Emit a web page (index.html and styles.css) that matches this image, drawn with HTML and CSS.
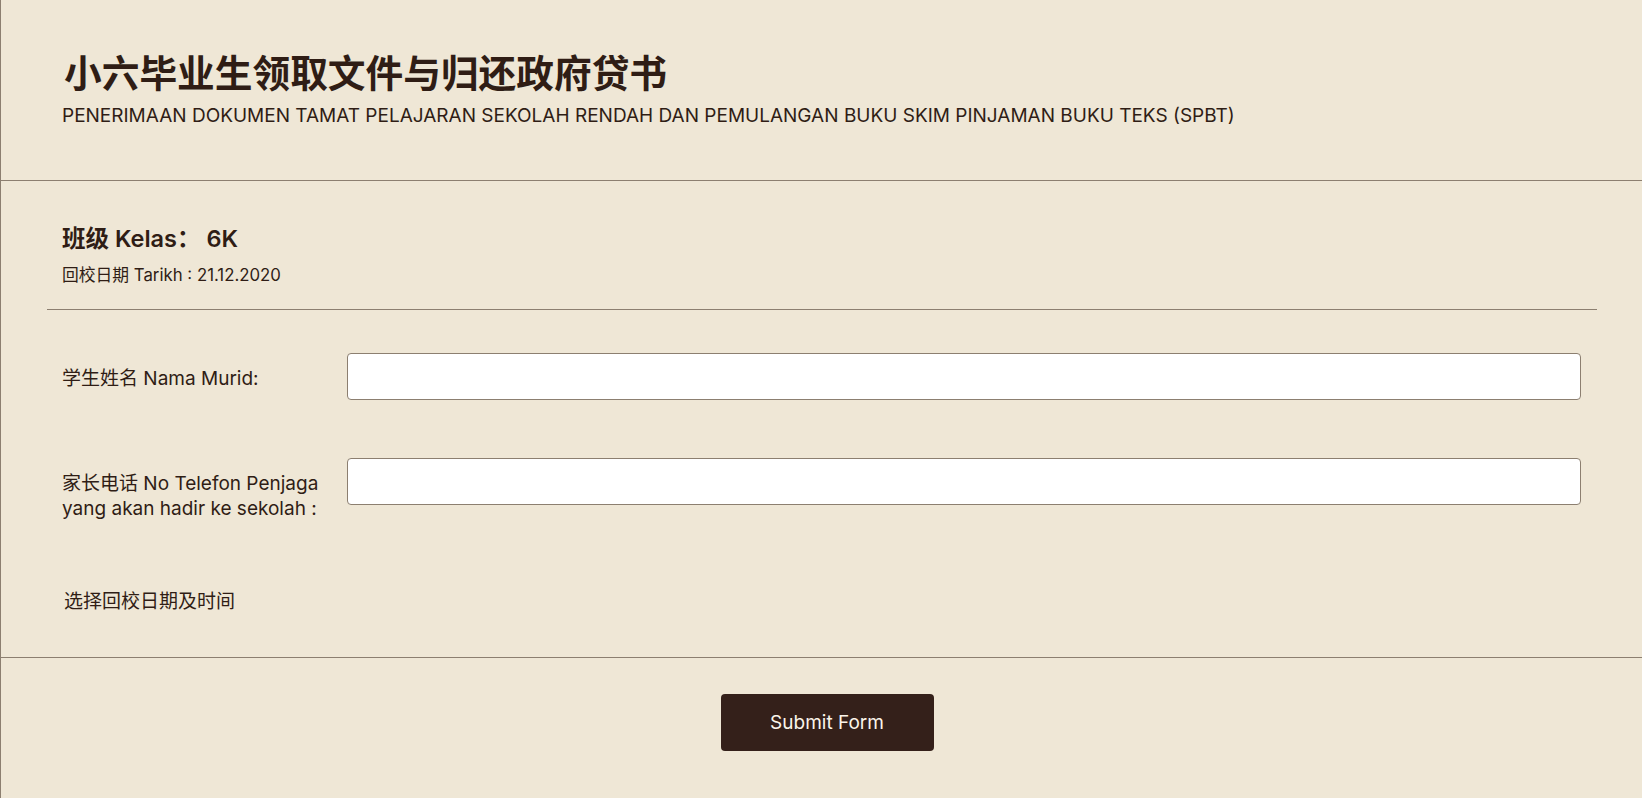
FILE: index.html
```html
<!DOCTYPE html>
<html lang="zh">
<head>
<meta charset="utf-8">
<title>小六毕业生领取文件与归还政府贷书</title>
<link rel="stylesheet" href="styles.css">
</head>
<body>
<div class="card">
  <header class="head">
    <h1 class="title">小六毕业生领取文件与归还政府贷书</h1>
    <p class="subtitle">PENERIMAAN DOKUMEN TAMAT PELAJARAN SEKOLAH RENDAH DAN PEMULANGAN BUKU SKIM PINJAMAN BUKU TEKS (SPBT)</p>
  </header>
  <section class="info">
    <h2 class="cls">班级 Kelas： 6K</h2>
    <p class="date">回校日期 Tarikh : 21.12.2020</p>
  </section>
  <hr class="sep">
  <form class="form">
    <div class="row">
      <label class="label" for="name">学生姓名 Nama Murid:</label>
      <input class="field" id="name" type="text">
    </div>
    <div class="row">
      <label class="label" for="phone">家长电话 No Telefon Penjaga yang akan hadir ke sekolah :</label>
      <input class="field" id="phone" type="text">
    </div>
    <p class="choose">选择回校日期及时间</p>
  </form>
  <footer class="foot">
    <button class="submit" type="button">Submit Form</button>
  </footer>
</div>
</body>
</html>
```

FILE: styles.css
```css
* { box-sizing: border-box; }
html, body { margin: 0; padding: 0; }
body {
  background: #efe7d6;
  color: #2f1d15;
  font-family: Inter, "Noto Sans CJK SC", sans-serif;
  overflow: hidden;
}
.card {
  width: 1642px;
  height: 798px;
  border-left: 1px solid #8c7f70;
  background: #efe7d6;
}
.head {
  padding: 50px 61px 0 61px;
  height: 181px;
  border-bottom: 1px solid #8c7f70;
}
.title {
  margin: 0 0 0 2px;
  font-size: 37.7px;
  line-height: 46px;
  font-weight: 700;
}
.subtitle {
  margin: 8px 0 0 0;
  font-size: 19px;
  line-height: 24px;
  font-weight: 400;
}
.info {
  padding: 44px 61px 0 61px;
  height: 128px;
}
.cls {
  margin: 0;
  font-size: 23.5px;
  line-height: 28px;
  font-weight: 600;
}
.date {
  margin: 12px 0 0 0;
  font-size: 16.8px;
  line-height: 20px;
}
.sep {
  margin: 0 45px 0 46px;
  border: 0;
  border-top: 1px solid #8c7f70;
  height: 0;
}
.form {
  padding: 43px 61px 0 61px;
  height: 348px;
  border-bottom: 1px solid #8c7f70;
}
.row {
  display: flex;
  align-items: flex-start;
  margin-bottom: 58px;
}
.label {
  width: 285px;
  flex: none;
  padding: 13px 20px 0 0;
  font-size: 19px;
  line-height: 25px;
}
.field {
  flex: 1;
  height: 47px;
  border: 1px solid #8c7f70;
  border-radius: 4px;
  background: #fff;
  font: inherit;
}
.choose {
  margin: 0 0 0 2px;
  padding-top: 10px;
  font-size: 19px;
  line-height: 25px;
}
.foot {
  display: flex;
  justify-content: center;
  padding: 36px 0 0 11px;
}
.submit {
  width: 213px;
  height: 57px;
  border: 0;
  border-radius: 4px;
  background: #34201a;
  color: #fbf5ea;
  font-family: Inter, sans-serif;
  font-size: 19px;
}
```
